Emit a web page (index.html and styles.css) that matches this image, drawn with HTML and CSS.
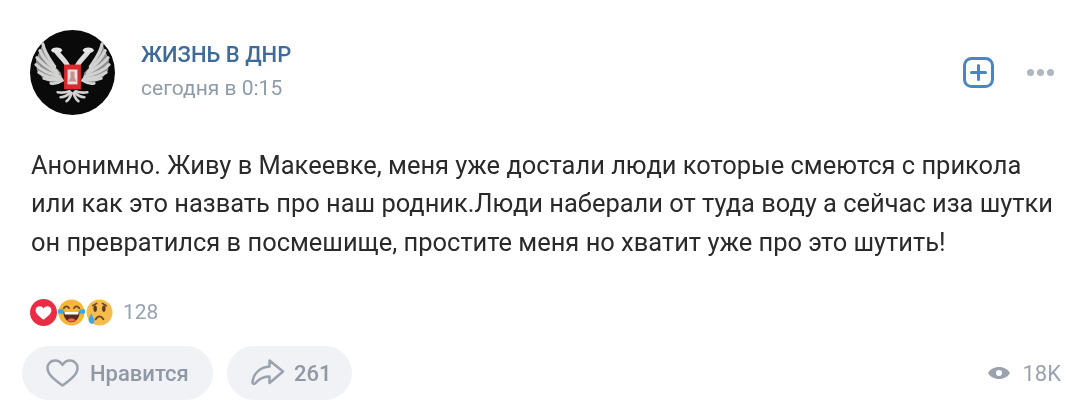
FILE: index.html
```html
<!DOCTYPE html>
<html lang="ru">
<head>
<meta charset="utf-8">
<title>ЖИЗНЬ В ДНР</title>
<link rel="stylesheet" href="styles.css">
</head>
<body>
<article class="post">
  <header class="head">
    <svg class="avatar" viewBox="0 0 86 86" aria-hidden="true">
      <defs>
        <filter id="soft" x="-10%" y="-10%" width="120%" height="120%"><feGaussianBlur stdDeviation="0.55"/></filter>
        <g id="half">
          <path d="M13 14 L6 30 L7 41 L14 50 L24 54 L33 50 L31 43 L22 34Z" fill="#8d8d8d"/>
          <g fill="none" stroke="#d2d2d2" stroke-linecap="round">
            <path stroke-width="3.200" d="M25 37 C21 31 15 24 13 14"/>
            <path stroke-width="3.200" d="M27 42 C21 36 14 30 10 21"/>
            <path stroke-width="3.200" d="M28 44 C21 40 13 36 7 28"/>
            <path stroke-width="3.200" d="M30 47 C22 45 12 42 6 35"/>
            <path stroke-width="3.200" d="M31 49 C23 49 15 47 9 43"/>
            <path stroke-width="3" d="M32 50 C26 51 20 51 14 49"/>
            <path stroke-width="2.800" d="M33 51 C30 53 26 55 21 54"/>
            <path stroke-width="5" d="M39 39 C38 33 33 30 27 22" stroke="#dedede"/>
            <path stroke-width="2.600" d="M40 62 C37 63 33 64 28 63"/>
            <path stroke-width="2.600" d="M41 63 C39 65 36 68 31 68"/>
            <path stroke-width="2.600" d="M42 64 C41 67 40 70 37 72"/>
          </g>
          <ellipse cx="27" cy="20.500" rx="5.500" ry="2.800" fill="#e6e6e6"/>
        </g>
      </defs>
      <circle cx="43" cy="43" r="43" fill="#0b0a0b"/>
      <g filter="url(#soft)">
        <use href="#half"/>
        <use href="#half" transform="translate(86 0) scale(-1 1)"/>
        <rect x="34.500" y="35" width="17" height="25" fill="#d92a2e"/>
        <rect x="38" y="40" width="10" height="15" fill="#eadfdc"/>
        <path d="M41 42 H45 V48 L47 52 H39 L41 48Z" fill="#c98f8f"/>
      </g>
    </svg>
    <div class="meta">
      <a class="name">ЖИЗНЬ В ДНР</a>
      <time class="date">сегодня в 0:15</time>
    </div>
    <div class="tools">
      <svg class="add" viewBox="0 0 31 31" aria-hidden="true">
        <rect x="1.500" y="1.500" width="28" height="28" rx="7" fill="none" stroke="#4a86c5" stroke-width="3"/>
        <path d="M15.500 8.500v14M8.500 15.500h14" fill="none" stroke="#4a86c5" stroke-width="3" stroke-linecap="round"/>
      </svg>
      <div class="dots"><i></i><i></i><i></i></div>
    </div>
  </header>

  <p class="text">Анонимно. Живу в Макеевке, меня уже достали люди которые смеются с прикола<br>или как это назвать про наш родник.Люди наберали от туда воду а сейчас иза шутки<br>он превратился в посмешище, простите меня но хватит уже про это шутить!</p>

  <div class="reactions">
    <div class="faces">
      <svg class="face" viewBox="0 0 28 28" aria-hidden="true">
        <circle cx="14" cy="14" r="14" fill="#ec2b45"/>
        <path d="M14 21.500 C8 17 5.800 14.500 5.800 11.600 C5.800 9 7.800 7.400 10 7.400 C11.700 7.400 13.200 8.300 14 9.800 C14.800 8.300 16.300 7.400 18 7.400 C20.200 7.400 22.200 9 22.200 11.600 C22.200 14.500 20 17 14 21.500Z" fill="#fff"/>
      </svg>
      <svg class="face" viewBox="0 0 28 28" aria-hidden="true">
        <circle cx="14" cy="14" r="13.500" fill="#f8b53c"/>
        <path d="M6 9.500 Q9 6 11.500 9.500 M16.500 9.500 Q19 6 22 9.500" fill="none" stroke="#6b4326" stroke-width="1.800" stroke-linecap="round"/>
        <path d="M5.500 13 H22.500 C22.500 20 18.500 24 14 24 C9.500 24 5.500 20 5.500 13Z" fill="#5a2a22"/>
        <path d="M6.500 13 H21.500 L21 16 H7Z" fill="#fff"/>
        <path d="M9.500 22 Q14 18 18.500 22 Q14 25 9.500 22Z" fill="#ef6a4c"/>
        <path d="M0 11 Q3 10 6 11 L5.500 15 Q2 16 0 14.500Z M28 11 Q25 10 22 11 L22.500 15 Q26 16 28 14.500Z" fill="#3fa6e8"/>
      </svg>
      <svg class="face" viewBox="0 0 28 28" aria-hidden="true">
        <circle cx="14" cy="14" r="13.500" fill="#f7bd4c"/>
        <path d="M7 7 L11 4.500 M21 7 L17 4.500" stroke="#6b4326" stroke-width="1.600" stroke-linecap="round"/>
        <ellipse cx="9.500" cy="10" rx="1.800" ry="3.200" fill="#5a3a22"/>
        <ellipse cx="18.500" cy="10" rx="1.800" ry="3.200" fill="#5a3a22"/>
        <path d="M10 21 Q14 15 18 21" fill="none" stroke="#6b4326" stroke-width="2" stroke-linecap="round"/>
        <path d="M5.500 15 C3 19 1.500 22 4 25 C7 27 9.500 24 8.500 21.500Z" fill="#3fa6e8"/>
      </svg>
    </div>
    <span class="count">128</span>
  </div>

  <footer class="actions">
    <button class="pill like" type="button">
      <svg class="heart" viewBox="0 0 34 30" aria-hidden="true">
        <path d="M17 27.500 C8 21 2 16 2 10 C2 5.500 5.500 2.500 9.500 2.500 C12.800 2.500 15.500 4.300 17 7 C18.500 4.300 21.200 2.500 24.500 2.500 C28.500 2.500 32 5.500 32 10 C32 16 26 21 17 27.500Z" fill="none" stroke="#99a2ad" stroke-width="2.500" stroke-linejoin="round"/>
      </svg>
      <span>Нравится</span>
    </button>
    <button class="pill share" type="button">
      <svg class="arrow" viewBox="0 0 34 30" aria-hidden="true">
        <path d="M19 2.500 L32.500 13.500 L19 25 V18.500 C14 18 8 21 4.500 25.500 C3 26.500 1.800 25.500 2 24 C3 15 10 9 19 8.500Z" fill="none" stroke="#99a2ad" stroke-width="2.500" stroke-linejoin="round"/>
      </svg>
      <span>261</span>
    </button>
    <div class="views">
      <svg class="eye" viewBox="0 0 24 16" aria-hidden="true">
        <path fill-rule="evenodd" d="M12 2 C17 2 21 4.500 23 8 C21 11.500 17 14 12 14 C7 14 3 11.500 1 8 C3 4.500 7 2 12 2Z M12 5 A3 3 0 1 0 12 11 A3 3 0 1 0 12 5Z" fill="#99a2ad"/>
      </svg>
      <span>18K</span>
    </div>
  </footer>
</article>
</body>
</html>
```

FILE: styles.css
```css
* { box-sizing: border-box; }
html, body { margin: 0; background: #fff; }
body { font-family: Roboto, "Noto Sans", sans-serif; overflow: hidden; }
.post { width: 1088px; height: 407px; padding: 29px 27px 0 22px; filter: blur(0.45px); }
.head { display: flex; align-items: center; height: 86px; padding-left: 8px; }
.avatar { width: 85px; height: 85px; flex: none; }
.meta { display: flex; flex-direction: column; margin-left: 26px; flex: 1; padding-bottom: 1px; }
.name { font-size: 22px; line-height: 28px; font-weight: 500; color: #3f6b9b; }
.date { font-size: 21px; line-height: 28px; color: #8f9bab; margin-top: 5px; }
.tools { display: flex; align-items: center; gap: 33px; margin-right: 7px; }
.add { width: 31px; height: 31px; display: block; }
.dots { display: flex; gap: 3px; }
.dots i { width: 7px; height: 7px; border-radius: 50%; background: #aeb7c2; }
.text { margin: 31px 0 0 9px; font-size: 25.45px; line-height: 38.4px; color: #2a2a2a; white-space: nowrap; }
.reactions { display: flex; align-items: center; margin: 36.8px 0 0 8px; height: 28px; }
.faces { display: flex; }
.face { width: 27px; height: 27px; display: block; }
.face + .face { margin-left: 1px; }
.count { margin-left: 10px; font-size: 21px; color: #98a2b0; }
.actions { display: flex; align-items: center; margin-top: 20px; gap: 14px; }
.pill { display: flex; align-items: center; height: 54px; border: 0; border-radius: 27px; background: #f0f2f5; font: 500 22px Roboto, sans-serif; color: #8f98a4; padding: 0; }
.like { width: 191px; padding-left: 23px; gap: 10px; }
.share { width: 125px; padding-left: 23px; gap: 9px; }
.heart, .arrow { width: 35px; height: 30px; display: block; }
.views { margin-left: auto; display: flex; align-items: center; gap: 11px; font-size: 22px; color: #98a2b0; }
.eye { width: 24px; height: 16px; display: block; }
```
